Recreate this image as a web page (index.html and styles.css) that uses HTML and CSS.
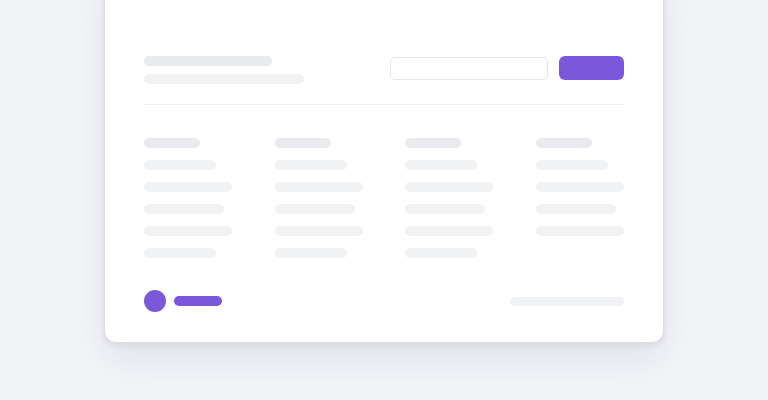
FILE: index.html
```html
<!DOCTYPE html>
<html>
<head>
<meta charset="utf-8">
<link rel="stylesheet" href="styles.css">
</head>
<body>
<div class="card">
  <div class="header">
    <div class="titles">
      <div class="bar title"></div>
      <div class="bar subtitle"></div>
    </div>
    <div class="actions">
      <div class="input"></div>
      <div class="button"></div>
    </div>
  </div>
  <div class="divider"></div>
  <div class="columns">
    <div class="col">
      <div class="bar head"></div>
      <div class="bar row w72"></div>
      <div class="bar row w88"></div>
      <div class="bar row w80"></div>
      <div class="bar row w88"></div>
      <div class="bar row w72"></div>
    </div>
    <div class="col">
      <div class="bar head"></div>
      <div class="bar row w72"></div>
      <div class="bar row w88"></div>
      <div class="bar row w80"></div>
      <div class="bar row w88"></div>
      <div class="bar row w72"></div>
    </div>
    <div class="col">
      <div class="bar head"></div>
      <div class="bar row w72"></div>
      <div class="bar row w88"></div>
      <div class="bar row w80"></div>
      <div class="bar row w88"></div>
      <div class="bar row w72"></div>
    </div>
    <div class="col">
      <div class="bar head"></div>
      <div class="bar row w72"></div>
      <div class="bar row w88"></div>
      <div class="bar row w80"></div>
      <div class="bar row w88"></div>
    </div>
  </div>
  <div class="footer">
    <div class="brand">
      <div class="dot"></div>
      <div class="bar accent"></div>
    </div>
    <div class="bar meta"></div>
  </div>
</div>
</body>
</html>
```

FILE: styles.css
```css
html {
  margin: 0;
  padding: 0;
  background: #f3f4f8;
  overflow: hidden;
}

body {
  margin: 0;
  padding: 0;
  min-height: 400px;
  background: #f3f4f8;
  font-family: "Inter", "Liberation Sans", sans-serif;
}

.card {
  box-sizing: border-box;
  width: 560px;
  margin: -24px auto 0;
  padding: 79px 39px 30px;
  background: #ffffff;
  border: 1px solid #dcdde2;
  border-radius: 0 0 12px 12px;
  box-shadow: 0 16px 36px rgba(30, 30, 60, 0.08), 0 3px 6px rgba(30, 30, 60, 0.07);
}

.bar {
  border-radius: 5px;
}

.header {
  display: flex;
  justify-content: space-between;
  align-items: flex-start;
}

.titles {
  display: flex;
  flex-direction: column;
  gap: 8px;
}

.title {
  width: 128px;
  height: 10px;
  background: #e9eaed;
}

.subtitle {
  width: 160px;
  height: 10px;
  background: #f1f2f4;
}

.actions {
  display: flex;
  gap: 11px;
}

.input {
  box-sizing: border-box;
  width: 158px;
  height: 23px;
  margin-top: 1px;
  border: 1px solid #e6e6ea;
  border-radius: 5px;
  background: #fff;
}

.button {
  width: 65px;
  height: 24px;
  border-radius: 6px;
  background: #7b57d9;
}

.divider {
  height: 1px;
  background: #eeeff2;
  margin-top: 20px;
}

.columns {
  display: flex;
  justify-content: space-between;
  margin-top: 33px;
}

.col {
  width: 88px;
  display: flex;
  flex-direction: column;
  gap: 12px;
}

.head {
  width: 56px;
  height: 10px;
  background: #e9eaed;
}

.row {
  height: 10px;
  background: #f1f2f4;
}

.w72 { width: 72px; }
.w80 { width: 80px; }
.w88 { width: 88px; }

.footer {
  display: flex;
  justify-content: space-between;
  align-items: center;
  margin-top: 32px;
}

.brand {
  display: flex;
  align-items: center;
  gap: 8px;
}

.dot {
  width: 22px;
  height: 22px;
  border-radius: 50%;
  background: #7b57d9;
}

.accent {
  width: 48px;
  height: 10px;
  background: #7b57d9;
}

.meta {
  width: 114px;
  height: 9px;
  background: #f1f2f5;
}
```
